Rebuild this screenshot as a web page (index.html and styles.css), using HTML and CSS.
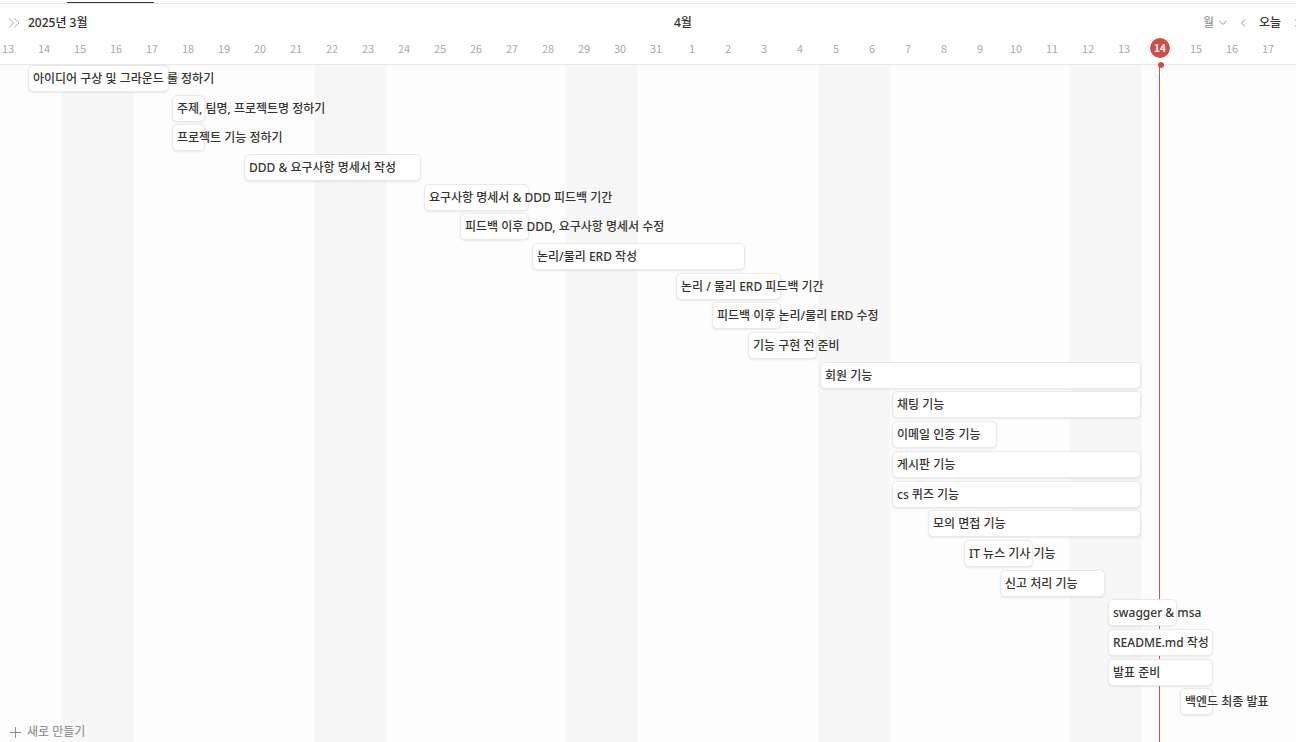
FILE: index.html
```
<!DOCTYPE html>
<html lang="ko">
<head>
<meta charset="utf-8">
<title>타임라인</title>
<link rel="stylesheet" href="styles.css">
</head>
<body>
<div class="tabs"><span class="tab-active"></span></div>
<header class="header">
  <div class="months">
    <button class="icon-button expand" aria-label="표 펼치기">
      <svg width="12" height="12" viewBox="0 0 12 12"><path d="M1 1.500 5.500 6 1 10.500M6.500 1.500 11 6l-4.500 4.500"/></svg>
    </button>
    <span class="month month-march">2025년 3월</span>
    <span class="month month-april">4월</span>
    <div class="controls">
      <label class="scale">
        <select class="scale-select" aria-label="기간 단위"><option>월</option></select>
        <svg width="8" height="6" viewBox="0 0 8 6"><path d="M.5 1 4 4.500 7.500 1"/></svg>
      </label>
      <button class="icon-button" aria-label="이전"><svg width="6" height="8" viewBox="0 0 6 8"><path d="M5 .5 1.500 4 5 7.500"/></svg></button>
      <button class="today-button">오늘</button>
      <button class="icon-button" aria-label="다음"><svg width="6" height="8" viewBox="0 0 6 8"><path d="M1 .5 4.500 4 1 7.500"/></svg></button>
    </div>
  </div>
  <div class="days" id="days"></div>
</header>
<main class="chart">
  <div class="bands" id="bands"></div>
  <div class="now"><span class="now-line"></span></div>
  <div class="content">
    <div class="rows" id="rows"></div>
    <button class="new-button">
      <svg width="12" height="12" viewBox="0 0 12 12"><path d="M6.500 1v11M1 6.500h11"/></svg>새로 만들기
    </button>
  </div>
</main>
<script src="timeline.js"></script>
</body>
</html>
```
FILE: styles.css
```
* { box-sizing: border-box; }
body {
  margin: 0;
  min-height: 100vh;
  display: flex;
  flex-direction: column;
  overflow: hidden;
  background: #fff;
  color: #37352f;
  font: 500 12px/16px "Noto Sans", "Noto Sans CJK KR", sans-serif;
}
button, select {
  margin: 0;
  padding: 0;
  border: 0;
  background: none;
  color: inherit;
  font: inherit;
}
svg { display: block; fill: none; stroke: #91908c; stroke-width: 1; }
.tabs { height: 4px; padding: 2px 0 0 67px; border-bottom: 1px solid #e9e9e9; }
.tab-active { display: block; width: 87px; height: 1px; background: #37352f; }

.header { height: 61px; border-bottom: 1px solid #e9e9e9; }
.months, .days, .bands, .now, .row {
  display: grid;
  grid-template-columns: repeat(37, 36px);
  margin-left: -10px;
}
.months { height: 34px; padding-top: 4px; align-items: center; }
.months > * { grid-row: 1; }
.month { white-space: nowrap; color: #2f2e2b; }
.expand { grid-column: 1; justify-self: end; margin-right: 6px; }
.expand svg { stroke: #acaba8; }
.month-march { grid-column: 2 / span 6; padding-left: 2px; }
.month-april { grid-column: 20 / span 3; }
.controls { grid-column: 34 / 38; justify-self: end; display: flex; align-items: center; gap: 13px; margin-right: 22px; }
.icon-button { display: flex; }
.scale { display: flex; align-items: center; gap: 4px; color: #8a8985; }
.scale-select { appearance: none; font-weight: 400; }

.days {
  height: 20px;
  align-items: center;
  justify-items: center;
  font-family: "Noto Sans CJK KR", "Noto Sans", sans-serif;
  font-size: 11px;
  font-weight: 400;
  color: #aaa9a6;
}
.day-today {
  width: 20px;
  height: 20px;
  border-radius: 50%;
  background: #d44c47;
  color: #fff;
  font-size: 10px;
  font-weight: 700;
  line-height: 20px;
  text-align: center;
}

.chart { flex: 1; display: grid; background: #fdfdfd; }
.bands, .now, .content { grid-area: 1 / 1; min-width: 0; }
.weekend { background: #f7f7f7; grid-row: 1; }
.now-line {
  position: relative;
  grid-column: 33;
  margin-left: 17px;
  width: 1px;
  background: #c4554d;
}
.now-line::before {
  content: "";
  position: absolute;
  top: -3px;
  left: -1px;
  width: 6px;
  height: 6px;
  border-radius: 50%;
  background: #d44c47;
}
.content { position: relative; display: flex; flex-direction: column; }
.rows { flex: 1; display: grid; grid-auto-rows: 1fr; }
.row { align-items: start; }
.bar {
  height: 27px;
  margin: 0 1px 0 2px;
  padding: 0 4px;
  border: 1px solid #e9e9e9;
  border-radius: 5px;
  background: #fff;
  box-shadow: 0 1px 2px rgba(15, 15, 15, 0.08);
  white-space: nowrap;
  line-height: 25px;
}
.new-button {
  height: 24px;
  display: flex;
  align-items: center;
  gap: 6px;
  padding: 4px 0 0 9px;
  font-weight: 400;
  color: #83827e;
}
```
FILE: timeline.js
```
// Column 1 is 13 March, column 20 is 1 April.
const march = (d) => d - 12;
const april = (d) => d + 19;

const days = document.getElementById("days");
for (let col = 1; col <= 36; col++) {
  const day = document.createElement("span");
  day.textContent = col < 20 ? col + 12 : col - 19;
  if (col === april(14)) day.className = "day-today";
  days.append(day);
}

const bands = document.getElementById("bands");
for (let col = march(15); col <= 37; col += 7) {
  const band = document.createElement("div");
  band.className = "weekend";
  band.style.gridColumn = `${col} / span 2`;
  bands.append(band);
}

const tasks = [
  ["아이디어 구상 및 그라운드 룰 정하기", march(14), march(17)],
  ["주제, 팀명, 프로젝트명 정하기", march(18), march(18)],
  ["프로젝트 기능 정하기", march(18), march(18)],
  ["DDD & 요구사항 명세서 작성", march(20), march(24)],
  ["요구사항 명세서 & DDD 피드백 기간", march(25), march(27)],
  ["피드백 이후 DDD, 요구사항 명세서 수정", march(26), march(27)],
  ["논리/물리 ERD 작성", march(28), april(2)],
  ["논리 / 물리 ERD 피드백 기간", april(1), april(3)],
  ["피드백 이후 논리/물리 ERD 수정", april(2), april(3)],
  ["기능 구현 전 준비", april(3), april(4)],
  ["회원 기능", april(5), april(13)],
  ["채팅 기능", april(7), april(13)],
  ["이메일 인증 기능", april(7), april(9)],
  ["게시판 기능", april(7), april(13)],
  ["cs 퀴즈 기능", april(7), april(13)],
  ["모의 면접 기능", april(8), april(13)],
  ["IT 뉴스 기사 기능", april(9), april(10)],
  ["신고 처리 기능", april(10), april(12)],
  ["swagger & msa", april(13), april(14)],
  ["README.md 작성", april(13), april(15)],
  ["발표 준비", april(13), april(15)],
  ["백엔드 최종 발표", april(15), april(15)],
];

const rows = document.getElementById("rows");
for (const [name, from, to] of tasks) {
  const row = document.createElement("div");
  row.className = "row";
  const bar = document.createElement("div");
  bar.className = "bar";
  bar.style.gridColumn = `${from} / ${to + 1}`;
  bar.textContent = name;
  row.append(bar);
  rows.append(row);
}
```
